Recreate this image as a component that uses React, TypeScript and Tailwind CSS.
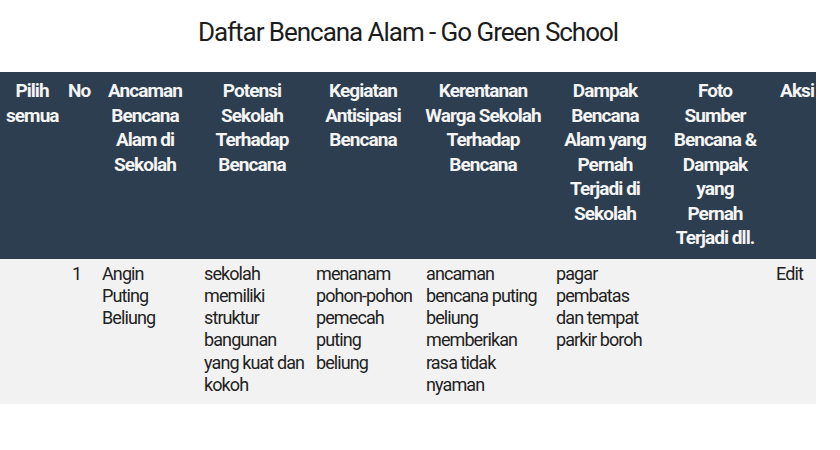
import React from "react";

type Row = {
    no: number;
    cells: string[][];
};

const headers = [
    "Pilih semua",
    "No",
    "Ancaman Bencana Alam di Sekolah",
    "Potensi Sekolah Terhadap Bencana",
    "Kegiatan Antisipasi Bencana",
    "Kerentanan Warga Sekolah Terhadap Bencana",
    "Dampak Bencana Alam yang Pernah Terjadi di Sekolah",
    "Foto Sumber Bencana & Dampak yang Pernah Terjadi dll.",
    "Aksi",
];

// each cell is split into the lines the original table wraps to
const rows: Row[] = [
    {
        no: 1,
        cells: [
            ["Angin", "Puting", "Beliung"],
            ["sekolah", "memiliki", "struktur", "bangunan", "yang kuat dan", "kokoh"],
            ["menanam", "pohon-pohon", "pemecah", "puting", "beliung"],
            ["ancaman", "bencana puting", "beliung", "memberikan", "rasa tidak", "nyaman"],
            ["pagar", "pembatas", "dan tempat", "parkir boroh"],
            [],
        ],
    },
];

const thBase = "pt-[7px] pb-[8px] align-top text-[19px] font-bold leading-[24.5px] tracking-[-0.05em]";
const tdBase = "px-[8px] pt-[4px] pb-[8px] align-top whitespace-nowrap";

export default function App() {
    return (
        <div className="min-h-[450px] bg-white font-['Roboto',sans-serif] text-[#222]">
            <div className="w-[816px]">
                <h1 className="pt-[16px] pb-[24px] text-center text-[26px] leading-[32px] tracking-[-0.04em] text-[#1c1c1c]">
                    Daftar Bencana Alam - Go Green School
                </h1>

                <table className="w-[816px] table-fixed border-collapse">
                    <colgroup>
                        <col className="w-[64px]" />
                        <col className="w-[30px]" />
                        <col className="w-[102px]" />
                        <col className="w-[112px]" />
                        <col className="w-[110px]" />
                        <col className="w-[130px]" />
                        <col className="w-[114px]" />
                        <col className="w-[106px]" />
                        <col className="w-[48px]" />
                    </colgroup>
                    <thead>
                        <tr className="bg-[#2c3e50] text-[#f4f4f4]">
                            {headers.map((h, i) => (
                                <th
                                    key={h}
                                    className={
                                        i === 1
                                            ? `px-[4px] text-center ${thBase}`
                                            : i === 8
                                              ? `pl-[8px] pr-[2px] text-right ${thBase}`
                                              : `px-[6px] text-center ${thBase}`
                                    }
                                >
                                    {h}
                                </th>
                            ))}
                        </tr>
                    </thead>
                    <tbody>
                        {rows.map((r) => (
                            <tr key={r.no} className="bg-[#f2f2f2] text-[18px] leading-[22.3px] tracking-[-0.05em] text-[#222]">
                                <td className={tdBase}></td>
                                <td className={tdBase}>{r.no}</td>
                                {r.cells.map((lines, i) => (
                                    <td key={i} className={tdBase}>
                                        {lines.map((l) => (
                                            <div key={l}>{l}</div>
                                        ))}
                                    </td>
                                ))}
                                <td className={tdBase}>Edit</td>
                            </tr>
                        ))}
                    </tbody>
                </table>
            </div>
        </div>
    );
}
